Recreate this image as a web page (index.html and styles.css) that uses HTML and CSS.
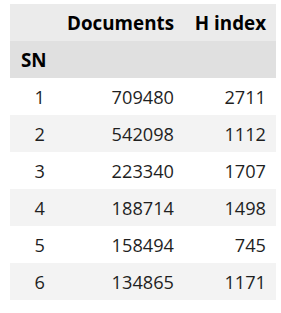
FILE: index.html
```html
<!DOCTYPE html>
<html>
<head>
<meta charset="utf-8">
<link rel="stylesheet" href="styles.css">
</head>
<body>
<table class="df">
  <colgroup>
    <col class="c-idx">
    <col class="c-doc">
    <col class="c-h">
  </colgroup>
  <thead>
    <tr class="hdr-cols">
      <th class="blank"></th>
      <th>Documents</th>
      <th>H index</th>
    </tr>
    <tr class="hdr-idx">
      <th class="idx-name">SN</th>
      <th></th>
      <th></th>
    </tr>
  </thead>
  <tbody>
    <tr><th class="idx">1</th><td>709480</td><td>2711</td></tr>
    <tr class="odd"><th class="idx">2</th><td>542098</td><td>1112</td></tr>
    <tr><th class="idx">3</th><td>223340</td><td>1707</td></tr>
    <tr class="odd"><th class="idx">4</th><td>188714</td><td>1498</td></tr>
    <tr><th class="idx">5</th><td>158494</td><td>745</td></tr>
    <tr class="odd"><th class="idx">6</th><td>134865</td><td>1171</td></tr>
  </tbody>
</table>
</body>
</html>
```

FILE: styles.css
```css
html, body {
  margin: 0;
  background: #ffffff;
}
body {
  padding: 4px 5px 0 10px;
  font-family: "Open Sans", "Noto Sans", sans-serif;
  font-size: 18.2px;
  color: #1f1f1f;
}
.df {
  border-collapse: collapse;
  border-spacing: 0;
  table-layout: fixed;
  width: 266px;
}
.c-idx { width: 46px; }
.c-doc { width: 128px; }
.c-h { width: 92px; }
.df th, .df td {
  height: 37px;
  padding: 0 10px 0 0;
  text-align: right;
  vertical-align: middle;
  white-space: nowrap;
  line-height: 24px;
  box-sizing: border-box;
}
.df th {
  font-weight: 700;
  font-size: 18.8px;
  color: #000;
}
.hdr-cols { background: #ebebeb; }
.hdr-idx { background: #e0e0e0; }
.df .idx-name {
  text-align: left;
  padding-left: 11px;
}
.df .idx {
  font-weight: 400;
  font-size: 18.2px;
  color: #1f1f1f;
  padding-right: 11px;
}
.odd { background: #f3f3f3; }
```
